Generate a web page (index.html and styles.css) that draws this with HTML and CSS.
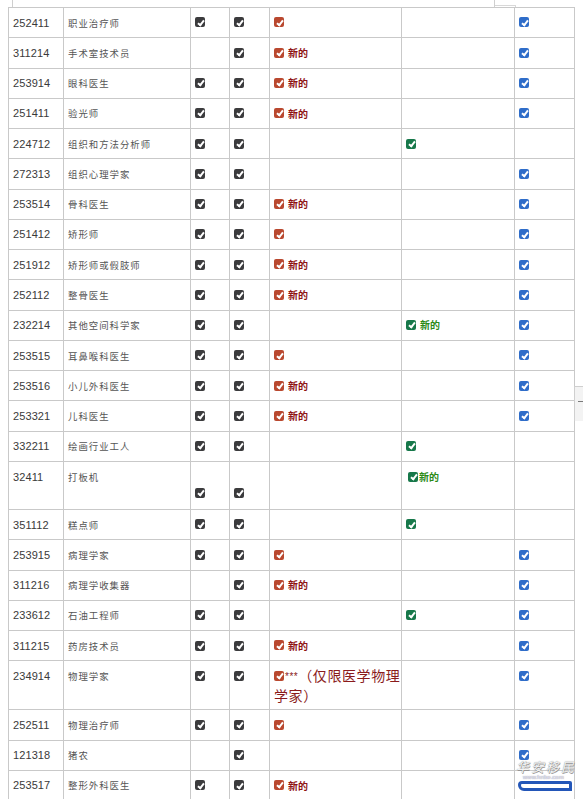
FILE: index.html
```html
<!DOCTYPE html>
<html lang="zh">
<head>
<meta charset="utf-8">
<title>职业清单</title>
<link rel="stylesheet" href="styles.css">
</head>
<body>
<div class="page">
  <div class="topstrip"><div class="frag-a"></div><div class="frag-b"></div></div>
  <table class="grid">
    <colgroup>
      <col class="c1"><col class="c2"><col class="c3"><col class="c4"><col class="c5"><col class="c6"><col class="c7">
    </colgroup>
    <tbody>
      <tr><td class="code">252411</td><td class="name">职业治疗师</td><td><i class="cb k"></i></td><td><i class="cb k"></i></td><td><i class="cb r"></i></td><td></td><td><i class="cb b"></i></td></tr>
      <tr><td class="code">311214</td><td class="name">手术室技术员</td><td></td><td><i class="cb k"></i></td><td><i class="cb r"></i><b class="new r">新的</b></td><td></td><td><i class="cb b"></i></td></tr>
      <tr><td class="code">253914</td><td class="name">眼科医生</td><td><i class="cb k"></i></td><td><i class="cb k"></i></td><td><i class="cb r"></i><b class="new r">新的</b></td><td></td><td><i class="cb b"></i></td></tr>
      <tr><td class="code">251411</td><td class="name">验光师</td><td><i class="cb k"></i></td><td><i class="cb k"></i></td><td><i class="cb r"></i><b class="new r">新的</b></td><td></td><td><i class="cb b"></i></td></tr>
      <tr><td class="code">224712</td><td class="name">组织和方法分析师</td><td><i class="cb k"></i></td><td><i class="cb k"></i></td><td></td><td><i class="cb g"></i></td><td></td></tr>
      <tr><td class="code">272313</td><td class="name">组织心理学家</td><td><i class="cb k"></i></td><td><i class="cb k"></i></td><td></td><td></td><td><i class="cb b"></i></td></tr>
      <tr><td class="code">253514</td><td class="name">骨科医生</td><td><i class="cb k"></i></td><td><i class="cb k"></i></td><td><i class="cb r"></i><b class="new r">新的</b></td><td></td><td><i class="cb b"></i></td></tr>
      <tr><td class="code">251412</td><td class="name">矫形师</td><td><i class="cb k"></i></td><td><i class="cb k"></i></td><td><i class="cb r"></i></td><td></td><td><i class="cb b"></i></td></tr>
      <tr><td class="code">251912</td><td class="name">矫形师或假肢师</td><td><i class="cb k"></i></td><td><i class="cb k"></i></td><td><i class="cb r"></i><b class="new r">新的</b></td><td></td><td><i class="cb b"></i></td></tr>
      <tr><td class="code">252112</td><td class="name">整骨医生</td><td><i class="cb k"></i></td><td><i class="cb k"></i></td><td><i class="cb r"></i><b class="new r">新的</b></td><td></td><td><i class="cb b"></i></td></tr>
      <tr><td class="code">232214</td><td class="name">其他空间科学家</td><td><i class="cb k"></i></td><td><i class="cb k"></i></td><td></td><td><i class="cb g"></i><b class="new g">新的</b></td><td><i class="cb b"></i></td></tr>
      <tr><td class="code">253515</td><td class="name">耳鼻喉科医生</td><td><i class="cb k"></i></td><td><i class="cb k"></i></td><td><i class="cb r"></i></td><td></td><td><i class="cb b"></i></td></tr>
      <tr><td class="code">253516</td><td class="name">小儿外科医生</td><td><i class="cb k"></i></td><td><i class="cb k"></i></td><td><i class="cb r"></i><b class="new r">新的</b></td><td></td><td><i class="cb b"></i></td></tr>
      <tr><td class="code">253321</td><td class="name">儿科医生</td><td><i class="cb k"></i></td><td><i class="cb k"></i></td><td><i class="cb r"></i><b class="new r">新的</b></td><td></td><td><i class="cb b"></i></td></tr>
      <tr><td class="code">332211</td><td class="name">绘画行业工人</td><td><i class="cb k"></i></td><td><i class="cb k"></i></td><td></td><td><i class="cb g"></i></td><td></td></tr>
      <tr class="tall-a"><td class="code top">32411</td><td class="name top">打板机</td><td class="low"><i class="cb k"></i></td><td class="low"><i class="cb k"></i></td><td></td><td class="top shift"><i class="cb g"></i><b class="new g tight">新的</b></td><td></td></tr>
      <tr><td class="code">351112</td><td class="name">糕点师</td><td><i class="cb k"></i></td><td><i class="cb k"></i></td><td></td><td><i class="cb g"></i></td><td></td></tr>
      <tr><td class="code">253915</td><td class="name">病理学家</td><td><i class="cb k"></i></td><td><i class="cb k"></i></td><td><i class="cb r"></i></td><td></td><td><i class="cb b"></i></td></tr>
      <tr><td class="code">311216</td><td class="name">病理学收集器</td><td></td><td><i class="cb k"></i></td><td><i class="cb r"></i><b class="new r">新的</b></td><td></td><td><i class="cb b"></i></td></tr>
      <tr><td class="code">233612</td><td class="name">石油工程师</td><td><i class="cb k"></i></td><td><i class="cb k"></i></td><td></td><td><i class="cb g"></i></td><td><i class="cb b"></i></td></tr>
      <tr><td class="code">311215</td><td class="name">药房技术员</td><td><i class="cb k"></i></td><td><i class="cb k"></i></td><td><i class="cb r"></i><b class="new r">新的</b></td><td></td><td><i class="cb b"></i></td></tr>
      <tr class="tall-b"><td class="code top">234914</td><td class="name top">物理学家</td><td class="top"><i class="cb k"></i></td><td class="top"><i class="cb k"></i></td><td class="top note"><i class="cb r"></i><span class="stars">***</span>（仅限医学物理<br>学家）</td><td></td><td class="top"><i class="cb b"></i></td></tr>
      <tr><td class="code">252511</td><td class="name">物理治疗师</td><td><i class="cb k"></i></td><td><i class="cb k"></i></td><td><i class="cb r"></i></td><td></td><td><i class="cb b"></i></td></tr>
      <tr><td class="code">121318</td><td class="name">猪农</td><td></td><td><i class="cb k"></i></td><td></td><td></td><td><i class="cb b"></i></td></tr>
      <tr><td class="code">253517</td><td class="name">整形外科医生</td><td><i class="cb k"></i></td><td><i class="cb k"></i></td><td><i class="cb r"></i><b class="new r">新的</b></td><td></td><td></td></tr>
    </tbody>
  </table>
  <div class="side-tab"><span class="plus-h"></span><span class="plus-v"></span></div>
  <div class="watermark">
    <span class="wm-title">华安移民</span>
    <span class="wm-url">www.hnbe.com</span>
    <span class="wm-bar"></span>
  </div>
</div>
</body>
</html>
```

FILE: styles.css
```css
html, body {
  margin: 0;
  padding: 0;
  background: #ffffff;
}

body {
  font-family: "Liberation Sans", Arial, "Noto Sans CJK SC", sans-serif;
  color: #333;
  overflow: hidden;
}

.page {
  position: relative;
  width: 583px;
  height: 799px;
  padding-left: 8px;
  box-sizing: border-box;
  overflow: hidden;
}

.topstrip {
  display: flex;
  height: 7px;
  padding-left: 4px;
}

.frag-a {
  width: 481px;
  height: 7px;
  border-left: 1px solid #cfcfcf;
  border-right: 1px solid #cfcfcf;
}

.frag-b {
  width: 20px;
  height: 1px;
  margin-top: 5px;
  border-top: 1px solid #d8d8d8;
  border-right: 1px solid #d8d8d8;
}

.grid {
  border-collapse: collapse;
  table-layout: fixed;
  width: 566px;
}

.c1 { width: 55px; }
.c2 { width: 127px; }
.c3 { width: 39px; }
.c4 { width: 40px; }
.c5 { width: 132px; }
.c6 { width: 113px; }
.c7 { width: 60px; }

.grid tr {
  height: 30.27px;
}

.grid td {
  border: 1px solid #c9c9c9;
  padding: 0 4px;
  vertical-align: middle;
  font-size: 10px;
  line-height: 12px;
  white-space: nowrap;
}

.grid td.code {
  font-family: "Liberation Sans", Arial, sans-serif;
  font-size: 11px;
  color: #3a3a3a;
  letter-spacing: 0.1px;
}

.grid td.name {
  font-family: "Noto Sans CJK SC", "Noto Sans", sans-serif;
  font-size: 9.4px;
  letter-spacing: 1px;
  color: #555;
}

.grid tr.tall-a { height: 48px; }
.grid tr.tall-b { height: 49px; }

.grid td.top {
  vertical-align: top;
  padding-top: 9px;
}

.grid td.low {
  vertical-align: bottom;
  padding-bottom: 10px;
}

.grid td.shift {
  padding-left: 6px;
}

.cb {
  position: relative;
  display: inline-block;
  width: 10px;
  height: 10px;
  border-radius: 2px;
  vertical-align: middle;
  margin-top: -1px;
}

.cb::after {
  content: "";
  position: absolute;
  left: 3.6px;
  top: 1.2px;
  width: 2.2px;
  height: 5px;
  border: solid #fff;
  border-width: 0 2px 2px 0;
  transform: rotate(38deg);
}

.cb.k { background: #3b3b3d; }
.cb.r { background: #b9482f; }
.cb.b { background: #2f6dc9; }
.cb.g { background: #17784a; }

.new {
  font-family: "Noto Sans CJK SC", sans-serif;
  font-size: 10px;
  font-weight: 700;
  margin-left: 4px;
  vertical-align: middle;
}

.new.r { color: #8e1212; }
.new.g { color: #2b8a16; }
.new.tight { margin-left: 1px; }

.grid td.note {
  white-space: nowrap;
  font-family: "Noto Sans CJK SC", sans-serif;
  font-size: 14px;
  line-height: 19px;
  letter-spacing: 0.6px;
  color: #8a1b1b;
  padding-top: 5px;
  padding-bottom: 0;
}

.note .cb {
  margin-top: -4px;
}

.stars {
  font-family: "Liberation Sans", Arial, sans-serif;
  font-size: 10px;
  color: #8a1b1b;
  letter-spacing: 0.5px;
  margin-left: 1px;
  vertical-align: 1px;
}

.side-tab {
  position: absolute;
  left: 574px;
  top: 386px;
  width: 20px;
  height: 34px;
  background: #f3f3f3;
  border-left: 1px solid #cfcfcf;
  border-top: 1px solid #cfcfcf;
}

.plus-h {
  position: absolute;
  left: 3px;
  top: 14px;
  width: 6px;
  height: 1px;
  background: #7a7a7a;
}

.plus-v {
  position: absolute;
  left: 8px;
  top: 8px;
  width: 2px;
  height: 12px;
  background: #7a7a7a;
}

.watermark {
  position: absolute;
  left: 513px;
  top: 759px;
  width: 66px;
  height: 40px;
  display: flex;
  flex-direction: column;
  align-items: flex-start;
}

.wm-title {
  font-family: "Noto Sans CJK SC", serif;
  font-size: 13px;
  font-style: italic;
  letter-spacing: 2px;
  color: #f4f4f4;
  line-height: 15px;
  text-shadow: 0 0 1px #777, 0.5px 0.5px 0 #999;
  margin-left: 3px;
}

.wm-url {
  font-family: "Liberation Sans", Arial, sans-serif;
  font-size: 6px;
  line-height: 6px;
  color: #eef;
  margin-left: 10px;
  text-shadow: 0 0 1px #556;
}

.wm-bar {
  width: 48px;
  height: 4px;
  margin-left: 5px;
  margin-top: 1px;
  background: #fff;
  border: 3px solid #2356b8;
  border-radius: 4px 2px 0 6px;
}
```
